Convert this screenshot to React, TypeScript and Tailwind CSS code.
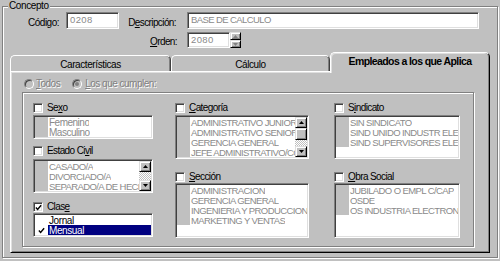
import React from "react";

const sunken =
  "border border-t-[#808080] border-l-[#808080] border-r-white border-b-white shadow-[inset_1px_1px_0_#404040,inset_-1px_-1px_0_#dfdfdf]";
const raised =
  "border border-t-[#dfdfdf] border-l-[#dfdfdf] border-r-black border-b-black shadow-[inset_1px_1px_0_#fff,inset_-1px_-1px_0_#808080]";
const etched = "border border-[#808080] shadow-[inset_1px_1px_0_#fff,1px_1px_0_#fff]";
const capsText = "text-[9.5px] tracking-[-0.6px]";

const Tick = ({ size = 8 }: { size?: number }) => (
  <svg width={size} height={size} viewBox="0 0 8 8">
    <path d="M1 4 L3 6.2 L7 1.5" fill="none" stroke="#000" strokeWidth="1.6" />
  </svg>
);

const Check = ({ checked }: { checked?: boolean }) => (
  <div className={`w-[10px] h-[10px] shrink-0 bg-white flex items-center justify-center ${sunken}`}>
    {checked && <Tick size={7} />}
  </div>
);

const Arrow = ({ up }: { up?: boolean }) => (
  <svg width="5" height="3" viewBox="0 0 5 3">
    <path d={up ? "M2.5 0 L5 3 L0 3 Z" : "M0 0 L5 0 L2.5 3 Z"} fill="#000" />
  </svg>
);

const ScrollBar = ({ thumb }: { thumb?: boolean }) => (
  <div className="w-[12px] h-full flex flex-col shrink-0">
    <div className={`h-[11px] bg-[#c0c0c0] flex items-center justify-center ${raised}`}>
      <Arrow up />
    </div>
    {thumb && <div className={`h-[12px] bg-[#c0c0c0] ${raised}`} />}
    <div className="flex-1 bg-[repeating-conic-gradient(#c0c0c0_0_25%,#ffffff_0_50%)] bg-[length:2px_2px]" />
    <div className={`h-[11px] bg-[#c0c0c0] flex items-center justify-center ${raised}`}>
      <Arrow />
    </div>
  </div>
);

const Label = ({ pre, u, post }: { pre?: string; u: string; post?: string }) => (
  <span className="text-[10px] leading-[12px] tracking-[-0.6px] text-black whitespace-nowrap">
    {pre}
    <span className="underline underline-offset-1">{u}</span>
    {post}
  </span>
);

const Head = ({ label, checked }: { label: React.ReactNode; checked?: boolean }) => (
  <div className="h-[12px] flex items-center gap-[4px]">
    <Check checked={checked} />
    {label}
  </div>
);

const List = ({
  items,
  h,
  scroll,
  caps = true,
}: {
  items: string[];
  h: string;
  scroll?: "thumb" | "plain";
  caps?: boolean;
}) => (
  <div className={`bg-white flex p-[1px] overflow-hidden ${sunken} ${h}`}>
    <div className="flex-1 min-w-0 flex flex-col">
      {items.map((it) => (
        <div key={it} className="h-[10px] flex items-center shrink-0">
          <div className="w-[13px] h-full bg-[#c0c0c0] shrink-0" />
          <div
            className={`pl-[1px] pt-[1px] whitespace-nowrap overflow-hidden text-[#8a8a8a] leading-[10px] ${
              caps ? capsText : "text-[10px] tracking-[-0.5px]"
            }`}
          >
            {it}
          </div>
        </div>
      ))}
    </div>
    {scroll && <ScrollBar thumb={scroll === "thumb"} />}
  </div>
);

const ClaseList = () => (
  <div className={`bg-white flex flex-col p-[1px] h-[24px] ${sunken}`}>
    <div className="h-[10px] flex items-center">
      <div className="w-[13px] shrink-0" />
      <div className="pl-[1px] pt-[1px] text-[10px] tracking-[-0.4px] leading-[10px] text-black">Jornal</div>
    </div>
    <div className="h-[10px] flex items-center">
      <div className="w-[13px] shrink-0 flex items-center justify-center">
        <Tick size={7} />
      </div>
      <div className="flex-1 h-full bg-[#000080] pl-[1px] pt-[1px] text-[10px] tracking-[-0.4px] leading-[10px] text-white">
        Mensual
      </div>
    </div>
  </div>
);

const Radio = ({ on }: { on?: boolean }) => (
  <div className="w-[10px] h-[10px] shrink-0 rounded-full bg-[#c0c0c0] border border-t-[#808080] border-l-[#808080] border-r-white border-b-white shadow-[inset_1px_1px_0_#404040] flex items-center justify-center">
    {on && <div className="w-[4px] h-[4px] rounded-full bg-[#808080]" />}
  </div>
);

const Tab = ({ label, w }: { label: string; w: string }) => (
  <div
    className={`h-[16px] ${w} pt-[1px] flex items-center justify-center border-t border-l border-r border-t-white border-l-white border-r-[#404040] rounded-t-[5px] shadow-[inset_-1px_0_0_#808080] text-[10px] tracking-[-0.4px] text-black`}
  >
    {label}
  </div>
);

export default function App() {
  return (
    <div className="w-[500px] h-[261px] bg-[#c0c0c0] overflow-hidden font-['Liberation_Sans',Arial,sans-serif] text-black">
      <fieldset className={`ml-[2px] w-[496px] pb-[4px] ${etched}`}>
        <legend className="ml-[5px] px-[1px] bg-[#c0c0c0] text-[10px] tracking-[-0.4px] leading-[12px]">Concepto</legend>

        {/* Código / Descripción */}
        <div className="flex items-center h-[17px]">
          <div className="w-[56px] text-right">
            <span className="text-[10px] tracking-[-0.5px]">Código:</span>
          </div>
          <div className={`ml-[7px] w-[53px] h-[17px] bg-white flex items-center pl-[3px] text-[9.5px] tracking-[0.4px] text-[#8a8a8a] ${sunken}`}>
            0208
          </div>
          <div className="w-[57px] text-right">
            <Label pre="D" u="e" post="scripción:" />
          </div>
          <div className={`ml-[11px] w-[292px] h-[17px] bg-white flex items-center pl-[3px] text-[#8a8a8a] ${capsText} ${sunken}`}>
            BASE DE CALCULO
          </div>
        </div>

        {/* Orden */}
        <div className="flex items-center h-[16px] mt-[3px]">
          <div className="w-[174px] text-right">
            <Label u="O" post="rden:" />
          </div>
          <div className={`ml-[10px] w-[43px] h-[16px] bg-white flex items-center pl-[3px] text-[9.5px] tracking-[0.4px] text-[#8a8a8a] ${sunken}`}>
            2080
          </div>
          <div className="w-[11px] h-[16px] flex flex-col">
            <div className={`h-[8px] bg-[#c0c0c0] flex items-center justify-center ${raised}`}>
              <svg width="5" height="3" viewBox="0 0 5 3">
                <path d="M2.5 0 L5 3 L0 3 Z" fill="#808080" />
              </svg>
            </div>
            <div className={`h-[8px] bg-[#c0c0c0] flex items-center justify-center ${raised}`}>
              <svg width="5" height="3" viewBox="0 0 5 3">
                <path d="M0 0 L5 0 L2.5 3 Z" fill="#808080" />
              </svg>
            </div>
          </div>
        </div>

        {/* Tabs */}
        <div className="ml-[7px] mt-[4px] h-[19px] flex items-end">
          <Tab label="Características" w="w-[161px]" />
          <Tab label="Cálculo" w="w-[159px]" />
          <div className="relative z-10 -mb-[2px] w-[160px] h-[21px] pb-[3px] bg-[#c0c0c0] flex items-center justify-center whitespace-nowrap border-t border-l border-r border-t-white border-l-white border-r-black rounded-t-[5px] shadow-[inset_-1px_0_0_#808080,inset_1px_1px_0_#dfdfdf] text-[10.5px] tracking-[-0.6px] font-bold">
            Empleados a los que Aplica
          </div>
        </div>

        {/* Panel */}
        <div className="ml-[7px] w-[480px] h-[182px] pt-[6px] pl-[11px] border border-t-white border-l-white border-r-black border-b-black shadow-[inset_1px_1px_0_#dfdfdf,inset_-1px_-1px_0_#808080]">
          <div className="h-[11px] flex items-center pl-[2px] text-[10px] tracking-[-0.5px] text-[#808080] [text-shadow:1px_1px_0_#fff]">
            <Radio />
            <span className="ml-[2px]">
              <span className="underline underline-offset-1">T</span>odos
            </span>
            <div className="ml-[12px]">
              <Radio on />
            </div>
            <span className="ml-[3px]">
              <span className="underline underline-offset-1">L</span>os que cumplen:
            </span>
          </div>

          <div className={`mt-[3px] w-[452px] h-[155px] pt-[9px] pl-[10px] flex ${etched}`}>
            {/* column 1 */}
            <div className="w-[120px] flex flex-col">
              <Head label={<Label pre="Se" u="x" post="o" />} />
              <div className="mt-[1px]">
                <List items={["Femenino", "Masculino"]} h="h-[24px]" caps={false} />
              </div>
              <div className="mt-[6px]">
                <Head label={<Label pre="Estado Ci" u="v" post="il" />} />
              </div>
              <div className="mt-[2px]">
                <List items={["CASADO/A", "DIVORCIADO/A", "SEPARADO/A DE HECHO"]} h="h-[34px]" scroll="plain" />
              </div>
              <div className="mt-[8px]">
                <Head checked label={<Label pre="Clas" u="e" />} />
              </div>
              <ClaseList />
            </div>

            {/* column 2 */}
            <div className="ml-[22px] w-[134px] flex flex-col">
              <Head label={<Label u="C" post="ategoría" />} />
              <div className="mt-[1px]">
                <List
                  items={[
                    "ADMINISTRATIVO JUNIOR",
                    "ADMINISTRATIVO SENIOR",
                    "GERENCIA GENERAL",
                    "JEFE ADMINISTRATIVO/CONTABLE",
                  ]}
                  h="h-[44px]"
                  scroll="thumb"
                />
              </div>
              <div className="mt-[12px]">
                <Head label={<Label u="S" post="ección" />} />
              </div>
              <List
                items={["ADMINISTRACION", "GERENCIA GENERAL", "INGENIERIA Y PRODUCCION", "MARKETING Y VENTAS"]}
                h="h-[55px]"
              />
            </div>

            {/* column 3 */}
            <div className="ml-[25px] w-[126px] flex flex-col">
              <Head label={<Label pre="S" u="i" post="ndicato" />} />
              <div className="mt-[1px]">
                <List
                  items={["SIN SINDICATO", "SIND UNIDO INDUSTR ELECTRICOS", "SIND SUPERVISORES ELECTRICOS"]}
                  h="h-[44px]"
                />
              </div>
              <div className="mt-[12px]">
                <Head label={<Label u="O" post="bra Social" />} />
              </div>
              <List items={["JUBILADO O EMPL C/CAP", "OSDE", "OS INDUSTRIA ELECTRONICA"]} h="h-[55px]" />
            </div>
          </div>
        </div>
      </fieldset>
    </div>
  );
}
